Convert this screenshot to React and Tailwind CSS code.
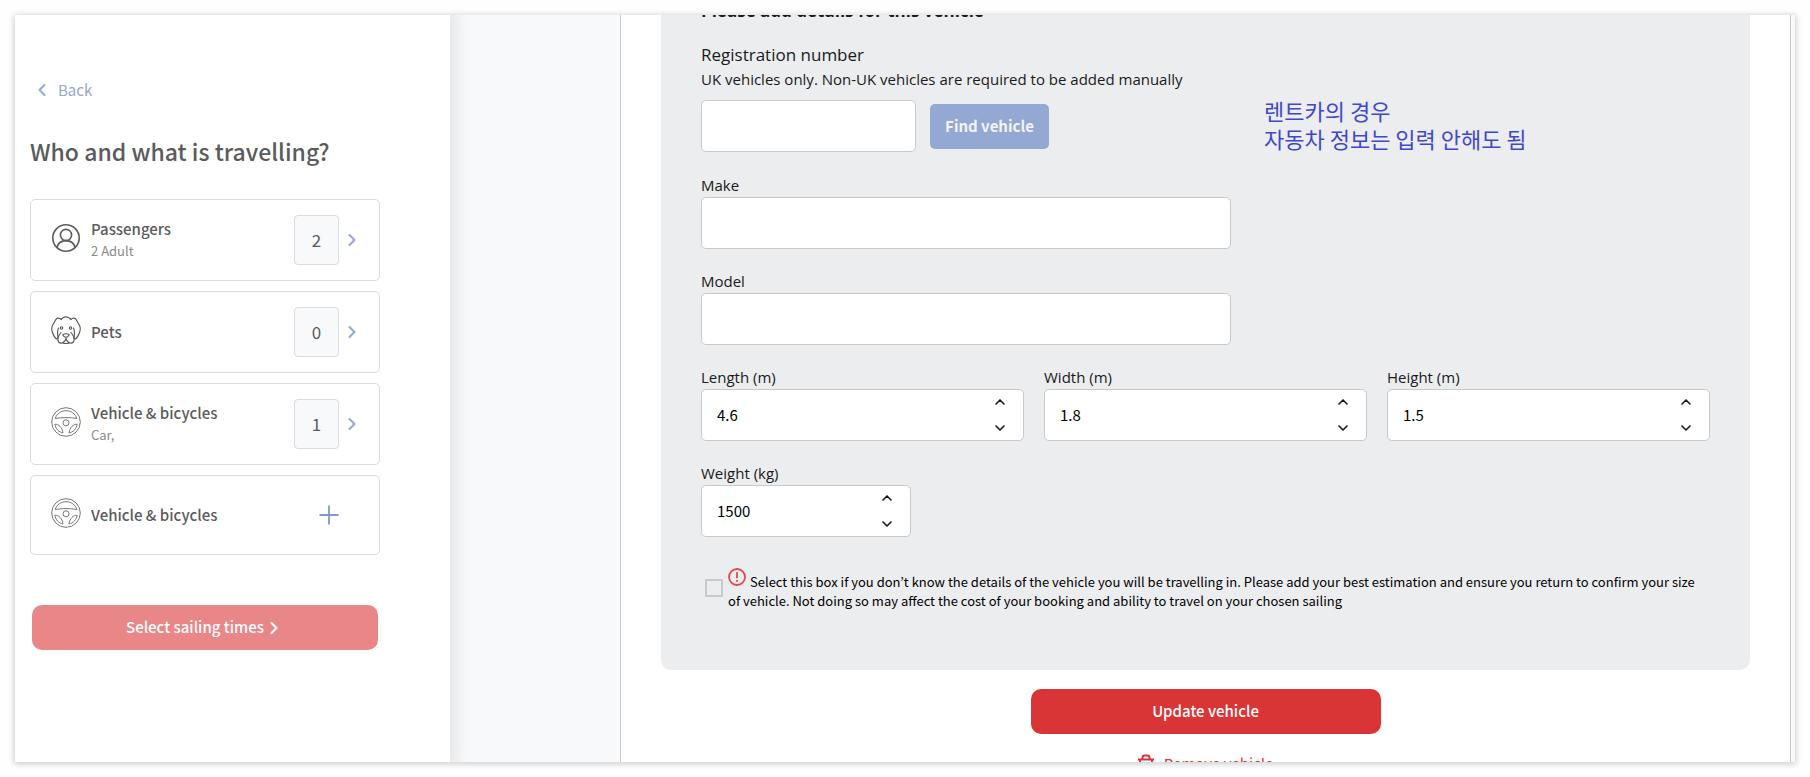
import { ChevronDown, ChevronLeft, ChevronRight, ChevronUp } from 'lucide-react'

function PersonIcon() {
  return (
    <svg viewBox="0 0 30 30" className="w-[30px] h-[30px] mb-1" fill="none" stroke="#5b5b5b" strokeWidth="1.6">
      <circle cx="15" cy="15" r="13.2" />
      <circle cx="15" cy="12" r="5.6" />
      <path d="M6 24.2c1.2-4.2 4.6-6.6 9-6.6s7.800 2.400 9 6.600" />
    </svg>
  )
}

function DogIcon() {
  return (
    <svg
      viewBox="0 0 30 30"
      className="w-[30px] h-[30px] mb-1"
      fill="none"
      stroke="#555"
      strokeWidth="1.100"
      strokeLinecap="round"
      strokeLinejoin="round"
    >
      <path d="M10 4.500C10.500 3 12 3.300 12.600 2.500c1.600-.9 3.200-.9 4.800 0 .6.8 2.100.5 2.600 2" />
      <path d="M10 4.500C8.500 2.800 6.500 2.500 5 4.300L1.500 10.500C.2 13 .5 15 1.500 17.500 2.500 20.500 4 23 5.500 24c1.300.3 1.500-1.500 1.300-3-.3-2.500-.8-5 .7-8" />
      <path d="M20 4.500C21.500 2.800 23.500 2.500 25 4.300l3.500 6.200c1.300 2.500 1 4.500 0 7-1 3-2.500 5.500-4 6.500-1.300.3-1.500-1.500-1.300-3 .3-2.500.8-5-.7-8" />
      <circle cx="10.500" cy="13" r="1.200" />
      <circle cx="19.500" cy="13" r="1.200" />
      <path d="M12 20.200c-.6-.9.600-1.400 3-1.400s3.600.5 3 1.400c-.6 1.200-1.900 2-3 2s-2.400-.8-3-2zM15 22.200V24" />
      <path d="M10 17.500c-2 2.500-3.500 5.500-3 8 .5 2 2.500 2.800 4 2.500 2-.3 3-1.800 4-4 1 2.200 2 3.700 4 4 1.500.3 3.500-.5 4-2.500.5-2.500-1-5.500-3-8" />
      <path d="M12 27.800c1 1 5 1 6 0" />
    </svg>
  )
}

function WheelIcon() {
  return (
    <svg viewBox="0 0 30 30" className="w-[30px] h-[30px] mb-1" fill="none" stroke="#777" strokeWidth="1" strokeLinejoin="round">
      <circle cx="15" cy="15" r="14.300" />
      <path d="M4.200 11.500C5.800 6.500 10 3.700 15 3.700s9.200 2.800 10.800 7.800C22 10.800 18.500 10.600 15 10.600s-7 .2-10.800.9z" />
      <circle cx="15" cy="15.800" r="3" />
      <path d="M3.800 17.200c4 0 7.400 3 8.200 8.800-4.200-.8-7.400-4.300-8.200-8.800zM26.200 17.200c-4 0-7.400 3-8.200 8.800 4.200-.8 7.400-4.300 8.200-8.800z" />
    </svg>
  )
}

const travelItems = [
  { title: 'Passengers', detail: '2 Adult', count: 2, icon: PersonIcon },
  { title: 'Pets', count: 0, icon: DogIcon },
  { title: 'Vehicle & bicycles', detail: 'Car,', count: 1, icon: WheelIcon },
]

function TravelCard({ title, detail, count, icon: Icon }) {
  return (
    <button
      type="button"
      className="flex items-center w-full h-[82px] pl-5 pr-[17px] rounded-[5px] border border-[#dcdcdc] bg-white text-left"
    >
      <Icon />
      <span className="flex flex-col flex-1 ml-[10px]">
        <span className="text-[15px] leading-[22px] font-medium text-[#5b5b5b]">{title}</span>
        {detail && <span className="text-[13px] leading-[22px] text-[#8a8a8a]">{detail}</span>}
      </span>
      <span className="flex items-center justify-center w-[45px] h-[50px] rounded border border-[#dcdcdc] bg-[#f8f9fb] text-[17px] text-[#5b5b5b]">
        {count}
      </span>
      <ChevronRight className="w-5 h-5 ml-[3px] text-[#93a8d3]" strokeWidth={2.5} />
    </button>
  )
}

function Sidebar() {
  return (
    <aside className="relative z-10 w-[435px] shrink-0 bg-white px-[15px] pt-[63px] shadow-[0_0_16px_6px_rgba(0,0,0,0.09)]">
      <a href="#back" className="flex items-center gap-[6px] pl-[2px] h-6 text-[15px] text-[#93a8d3]">
        <ChevronLeft className="w-5 h-5" strokeWidth={2.5} />
        Back
      </a>
      <h1 className="mt-[26px] mb-[25px] text-[23px] leading-[46px] font-medium text-[#5b5b5b]">Who and what is travelling?</h1>
      <div className="flex flex-col gap-[10px] w-[350px]">
        {travelItems.map((item) => (
          <TravelCard key={item.title} {...item} />
        ))}
        <button
          type="button"
          className="flex items-center w-full h-20 pl-5 pr-10 rounded-[5px] border border-[#dcdcdc] bg-white text-left"
        >
          <WheelIcon />
          <span className="flex-1 ml-[10px] text-[15px] leading-[22px] font-medium text-[#5b5b5b]">
            Vehicle &amp; bicycles
          </span>
          <svg viewBox="0 0 20 20" className="w-5 h-5" stroke="#7f99cc" strokeWidth="1.8">
            <path d="M10 0.500V19.500M0.500 10H19.500" />
          </svg>
        </button>
        <button
          type="button"
          className="flex items-center justify-center mt-10 mx-[2px] h-[45px] rounded-[10px] bg-[#e98687] text-[15px] font-medium text-white"
        >
          Select sailing times
          <ChevronRight className="w-5 h-5" strokeWidth={2.5} />
        </button>
      </div>
    </aside>
  )
}

function TextField({ id, label }) {
  return (
    <div className="w-[530px]">
      <label htmlFor={id} className="block text-[15px] leading-6">
        {label}
      </label>
      <input id={id} type="text" className="block w-full h-[52px] px-4 rounded-[5px] border border-[#c8c9cb] bg-white" />
    </div>
  )
}

function NumberField({ id, label, value, step }) {
  return (
    <div>
      <label htmlFor={id} className="block text-[15px] leading-6">
        {label}
      </label>
      <div className="flex h-[52px] rounded-[5px] border border-[#c8c9cb] bg-white">
        <input
          id={id}
          type="number"
          step={step}
          defaultValue={value}
          className="flex-1 min-w-0 pl-[15px] bg-transparent font-['Noto_Sans_CJK_KR',sans-serif] text-[15px] text-black [appearance:textfield]"
        />
        <div className="flex flex-col justify-between items-center py-1 pr-[15px]">
          <button type="button" aria-label={`Increase ${label}`}>
            <ChevronUp className="w-4 h-4" strokeWidth={2.5} />
          </button>
          <button type="button" aria-label={`Decrease ${label}`}>
            <ChevronDown className="w-4 h-4" strokeWidth={2.5} />
          </button>
        </div>
      </div>
    </div>
  )
}

function AlertIcon() {
  return (
    <svg viewBox="0 0 18 18" className="inline-block w-[18px] h-[18px] mr-1 -mt-3" fill="none" stroke="#e5484a" strokeWidth="1.8">
      <circle cx="9" cy="9" r="8" />
      <path d="M9 4.300V10.300M9 12V13.800" />
    </svg>
  )
}

function VehicleForm() {
  return (
    <form className="px-10 pt-10 pb-[60px] rounded-[10px] bg-[#ecedef] text-[#1a1a1a]">
      <h2 className="mb-5 text-[17px] leading-6 font-bold">Please add details for this vehicle</h2>
      <label htmlFor="registration" className="block text-[17px] leading-6">
        Registration number
      </label>
      <p className="mb-[9px] text-[15px] leading-6">UK vehicles only. Non-UK vehicles are required to be added manually</p>
      <div className="flex items-center h-[52px] mb-[21px]">
        <input id="registration" type="text" className="w-[215px] h-[52px] px-4 rounded-[5px] border border-[#c8c9cb] bg-white" />
        <button
          type="button"
          className="w-[119px] h-[45px] ml-[14px] rounded-[5px] bg-[#93a8d3] font-['Noto_Sans_CJK_KR',sans-serif] text-[15px] font-bold text-[#f4f4f4]"
        >
          Find vehicle
        </button>
        <p className="ml-[215px] pb-1 font-['Noto_Sans_CJK_KR',sans-serif] text-[22px] leading-7 text-[#3f48cc]">
          렌트카의 경우
          <br />
          자동차 정보는 입력 안해도 됨
        </p>
      </div>
      <div className="flex flex-col gap-5">
        <TextField id="make" label="Make" />
        <TextField id="model" label="Model" />
        <div className="grid grid-cols-3 gap-5">
          <NumberField id="length" label="Length (m)" value="4.6" step="0.1" />
          <NumberField id="width" label="Width (m)" value="1.8" step="0.1" />
          <NumberField id="height" label="Height (m)" value="1.5" step="0.1" />
        </div>
        <div className="w-[210px]">
          <NumberField id="weight" label="Weight (kg)" value="1500" step="1" />
        </div>
      </div>
      <div className="flex items-center gap-[5px] mt-[35px] pl-1 pr-3">
        <input
          id="unknown-details"
          type="checkbox"
          className="w-[18px] h-[18px] mb-[6px] shrink-0 appearance-none border-2 border-[#c8c9cb]"
        />
        <label htmlFor="unknown-details" className="font-['Noto_Sans_CJK_KR',sans-serif] text-[13px] leading-[19px] text-black">
          <AlertIcon />
          Select this box if you don’t know the details of the vehicle you will be travelling in. Please add your best
          estimation and ensure you return to confirm your size of vehicle. Not doing so may affect the cost of your
          booking and ability to travel on your chosen sailing
        </label>
      </div>
    </form>
  )
}

export default function App() {
  return (
    <div className="h-screen p-[15px] bg-[#fefefe] font-['Noto_Sans_CJK_KR',sans-serif]">
      <div className="flex h-full overflow-hidden bg-white shadow-[0_1px_6px_1px_rgba(0,0,0,0.2)]">
        <Sidebar />
        <main className="flex flex-1 pl-[170px] pr-1 bg-[#f8f9fb]">
          <section className="flex-1 px-10 border-x border-[#c8c9cb] bg-white">
            <div className="-mt-[56px] font-['Open_Sans',sans-serif]">
              <VehicleForm />
            </div>
            <div className="flex flex-col items-center mt-[19px]">
              <button type="button" className="w-[350px] h-[45px] rounded-[10px] bg-[#da3536] text-[15px] font-medium text-white">
                Update vehicle
              </button>
              <button type="button" className="flex items-center gap-[10px] mt-[18px] text-[15px] leading-6 text-[#da3536]">
                <svg viewBox="0 0 16 20" className="w-4 h-5" fill="none" stroke="currentColor" strokeWidth="2">
                  <path d="M0 5.500H16M4.500 5V3.500C4.500 2 5.500 1.500 6.500 1.500H9.500C10.500 1.500 11.500 2 11.500 3.500V5M2 6V18.500H14V6" />
                </svg>
                Remove vehicle
              </button>
            </div>
          </section>
        </main>
      </div>
    </div>
  )
}
